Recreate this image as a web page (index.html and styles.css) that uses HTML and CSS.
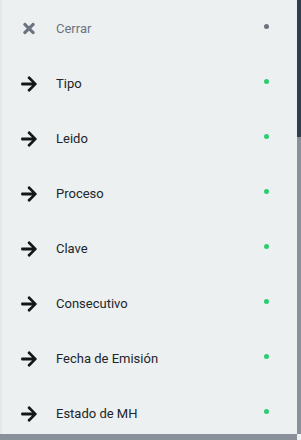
FILE: index.html
```html
<!DOCTYPE html>
<html lang="es">
<head>
<meta charset="utf-8">
<link rel="stylesheet" href="styles.css">
</head>
<body>
<div class="screen">
  <div class="main">
    <ul class="menu">
      <li class="item close">
        <span class="icon"><svg width="12" height="17" viewBox="0 0 352 512"><path fill="currentColor" d="M242.72 256l100.07-100.07c12.28-12.28 12.28-32.19 0-44.48l-22.24-22.24c-12.28-12.28-32.19-12.28-44.48 0L176 189.28 75.93 89.21c-12.28-12.28-32.19-12.28-44.48 0L9.21 111.45c-12.28 12.28-12.28 32.19 0 44.48L109.28 256 9.21 356.07c-12.28 12.28-12.28 32.19 0 44.48l22.24 22.24c12.28 12.28 32.2 12.28 44.48 0L176 322.72l100.07 100.07c12.28 12.28 32.2 12.28 44.48 0l22.24-22.24c12.28-12.28 12.28-32.19 0-44.48L242.72 256z"/></svg></span>
        <span class="label">Cerrar</span>
        <span class="dot gray"></span>
      </li>
      <li class="item"><span class="icon"><svg width="16" height="18" viewBox="0 0 448 512"><path fill="currentColor" d="M190.5 66.9l22.2-22.2c9.4-9.4 24.6-9.4 33.9 0L441 239c9.4 9.4 9.4 24.6 0 33.9L246.6 467.3c-9.4 9.4-24.6 9.4-33.9 0l-22.2-22.2c-9.5-9.5-9.3-25 .4-34.3L311.4 296H24c-13.3 0-24-10.7-24-24v-32c0-13.3 10.7-24 24-24h287.4L190.9 101.2c-9.8-9.3-10-24.8-.4-34.3z"/></svg></span><span class="label">Tipo</span><span class="dot green"></span></li>
      <li class="item"><span class="icon"><svg width="16" height="18" viewBox="0 0 448 512"><path fill="currentColor" d="M190.5 66.9l22.2-22.2c9.4-9.4 24.6-9.4 33.9 0L441 239c9.4 9.4 9.4 24.6 0 33.9L246.6 467.3c-9.4 9.4-24.6 9.4-33.9 0l-22.2-22.2c-9.5-9.5-9.3-25 .4-34.3L311.4 296H24c-13.3 0-24-10.7-24-24v-32c0-13.3 10.7-24 24-24h287.4L190.9 101.2c-9.8-9.3-10-24.8-.4-34.3z"/></svg></span><span class="label">Leido</span><span class="dot green"></span></li>
      <li class="item"><span class="icon"><svg width="16" height="18" viewBox="0 0 448 512"><path fill="currentColor" d="M190.5 66.9l22.2-22.2c9.4-9.4 24.6-9.4 33.9 0L441 239c9.4 9.4 9.4 24.6 0 33.9L246.6 467.3c-9.4 9.4-24.6 9.4-33.9 0l-22.2-22.2c-9.5-9.5-9.3-25 .4-34.3L311.4 296H24c-13.3 0-24-10.7-24-24v-32c0-13.3 10.7-24 24-24h287.4L190.9 101.2c-9.8-9.3-10-24.8-.4-34.3z"/></svg></span><span class="label">Proceso</span><span class="dot green"></span></li>
      <li class="item"><span class="icon"><svg width="16" height="18" viewBox="0 0 448 512"><path fill="currentColor" d="M190.5 66.9l22.2-22.2c9.4-9.4 24.6-9.4 33.9 0L441 239c9.4 9.4 9.4 24.6 0 33.9L246.6 467.3c-9.4 9.4-24.6 9.4-33.9 0l-22.2-22.2c-9.5-9.5-9.3-25 .4-34.3L311.4 296H24c-13.3 0-24-10.7-24-24v-32c0-13.3 10.7-24 24-24h287.4L190.9 101.2c-9.8-9.3-10-24.8-.4-34.3z"/></svg></span><span class="label">Clave</span><span class="dot green"></span></li>
      <li class="item"><span class="icon"><svg width="16" height="18" viewBox="0 0 448 512"><path fill="currentColor" d="M190.5 66.9l22.2-22.2c9.4-9.4 24.6-9.4 33.9 0L441 239c9.4 9.4 9.4 24.6 0 33.9L246.6 467.3c-9.4 9.4-24.6 9.4-33.9 0l-22.2-22.2c-9.5-9.5-9.3-25 .4-34.3L311.4 296H24c-13.3 0-24-10.7-24-24v-32c0-13.3 10.7-24 24-24h287.4L190.9 101.2c-9.8-9.3-10-24.8-.4-34.3z"/></svg></span><span class="label">Consecutivo</span><span class="dot green"></span></li>
      <li class="item"><span class="icon"><svg width="16" height="18" viewBox="0 0 448 512"><path fill="currentColor" d="M190.5 66.9l22.2-22.2c9.4-9.4 24.6-9.4 33.9 0L441 239c9.4 9.4 9.4 24.6 0 33.9L246.6 467.3c-9.4 9.4-24.6 9.4-33.9 0l-22.2-22.2c-9.5-9.5-9.3-25 .4-34.3L311.4 296H24c-13.3 0-24-10.7-24-24v-32c0-13.3 10.7-24 24-24h287.4L190.9 101.2c-9.8-9.3-10-24.8-.4-34.3z"/></svg></span><span class="label">Fecha de Emisión</span><span class="dot green"></span></li>
      <li class="item"><span class="icon"><svg width="16" height="18" viewBox="0 0 448 512"><path fill="currentColor" d="M190.5 66.9l22.2-22.2c9.4-9.4 24.6-9.4 33.9 0L441 239c9.4 9.4 9.4 24.6 0 33.9L246.6 467.3c-9.4 9.4-24.6 9.4-33.9 0l-22.2-22.2c-9.5-9.5-9.3-25 .4-34.3L311.4 296H24c-13.3 0-24-10.7-24-24v-32c0-13.3 10.7-24 24-24h287.4L190.9 101.2c-9.8-9.3-10-24.8-.4-34.3z"/></svg></span><span class="label">Estado de MH</span><span class="dot green"></span></li>
    </ul>
    <div class="bottom"></div>
  </div>
  <div class="side">
    <div class="side-top"></div>
    <div class="side-bottom"></div>
  </div>
</div>
</body>
</html>
```
FILE: styles.css
```css
* { box-sizing: border-box; }
html, body { margin: 0; padding: 0; }
body {
  width: 301px;
  height: 440px;
  overflow: hidden;
  background: #eef1f3;
  font-family: Roboto, "Liberation Sans", sans-serif;
}
.screen {
  display: flex;
  width: 301px;
  height: 440px;
}
.main {
  width: 297px;
  display: flex;
  flex-direction: column;
}
.menu {
  list-style: none;
  margin: 0;
  padding: 1px 0 0;
  height: 434px;
  overflow: hidden;
  background: #ecf0f1;
  border-left: 2px solid #e4e8ea;
}
.item {
  flex: none;
  height: 55px;
  display: flex;
  align-items: center;
  padding-left: 19px;
  padding-right: 28px;
  font-size: 13px;
  color: #212529;
}
.icon {
  width: 16px;
  display: flex;
  justify-content: center;
  color: #151617;
}
.icon svg { display: block; }
.close .icon { color: #6b7480; }
.close .label { color: #6b7480; }
.label {
  flex: 1;
  margin-left: 19px;
  line-height: 16px;
}
.dot {
  width: 5px;
  height: 5px;
  border-radius: 50%;
  margin-top: -4px;
}
.dot.gray { background: #6c737c; }
.dot.green { background: #2ecc71; }
.bottom {
  height: 6px;
  background: #8a909a;
}
.side {
  width: 4px;
  display: flex;
  flex-direction: column;
}
.side-top {
  height: 137px;
  background: #2d3e50;
}
.side-bottom {
  height: 297px;
  background: #8a909a;
}
```
